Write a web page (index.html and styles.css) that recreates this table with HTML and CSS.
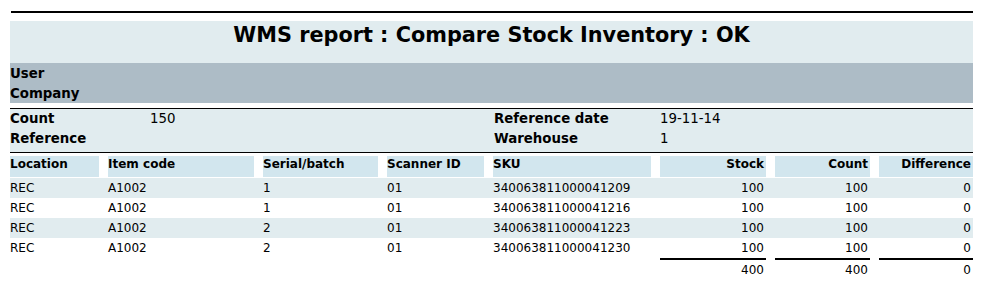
FILE: index.html
```html
<!DOCTYPE html>
<html>
<head>
<meta charset="utf-8">
<link rel="stylesheet" href="styles.css">
</head>
<body>
<div class="report">
  <div class="rule rule-thick"></div>
  <div class="title-band"><h1 class="title">WMS report : Compare Stock Inventory : OK</h1></div>
  <div class="meta-gray">
    <div class="meta-row"><span class="label">User</span></div>
    <div class="meta-row"><span class="label">Company</span></div>
  </div>
  <div class="rule rule-mid"></div>
  <div class="info">
    <span class="label">Count</span><span class="value">150</span><span class="label">Reference date</span><span class="value">19-11-14</span>
    <span class="label">Reference</span><span class="value"></span><span class="label">Warehouse</span><span class="value">1</span>
  </div>
  <div class="rule"></div>
  <div class="items">
    <div class="row head">
      <div class="cell">Location</div>
      <div class="cell">Item code</div>
      <div class="cell">Serial/batch</div>
      <div class="cell">Scanner ID</div>
      <div class="cell">SKU</div>
      <div class="cell num">Stock</div>
      <div class="cell num">Count</div>
      <div class="cell num">Difference</div>
    </div>
    <div class="row alt">
      <div class="cell">REC</div><div class="cell">A1002</div><div class="cell">1</div><div class="cell">01</div><div class="cell">340063811000041209</div><div class="cell num">100</div><div class="cell num">100</div><div class="cell num">0</div>
    </div>
    <div class="row">
      <div class="cell">REC</div><div class="cell">A1002</div><div class="cell">1</div><div class="cell">01</div><div class="cell">340063811000041216</div><div class="cell num">100</div><div class="cell num">100</div><div class="cell num">0</div>
    </div>
    <div class="row alt">
      <div class="cell">REC</div><div class="cell">A1002</div><div class="cell">2</div><div class="cell">01</div><div class="cell">340063811000041223</div><div class="cell num">100</div><div class="cell num">100</div><div class="cell num">0</div>
    </div>
    <div class="row">
      <div class="cell">REC</div><div class="cell">A1002</div><div class="cell">2</div><div class="cell">01</div><div class="cell">340063811000041230</div><div class="cell num">100</div><div class="cell num">100</div><div class="cell num">0</div>
    </div>
    <div class="row totals">
      <div class="cell"></div><div class="cell"></div><div class="cell"></div><div class="cell"></div><div class="cell"></div>
      <div class="cell num total">400</div><div class="cell num total">400</div><div class="cell num total">0</div>
    </div>
  </div>
</div>
</body>
</html>
```
FILE: styles.css
```css
html, body {
  margin: 0;
  padding: 0;
  background: #ffffff;
}
body {
  font-family: "DejaVu Sans", Verdana, sans-serif;
  color: #000000;
}
.report {
  width: 963px;
  padding: 11px 0 0 10px;
}
.rule {
  height: 1px;
  background: #000000;
}
.rule-thick {
  height: 2px;
  margin-left: 1px;
  margin-bottom: 8px;
}
.rule-mid {
  margin-top: 5px;
}
.title-band {
  background: #e1ecef;
  height: 42px;
  padding-top: 2px;
  box-sizing: border-box;
}
.title {
  margin: 0;
  font-size: 20.8px;
  line-height: 25px;
  font-weight: bold;
  text-align: center;
}
.meta-gray {
  background: #adbcc6;
  height: 40px;
}
.meta-row {
  height: 20px;
  line-height: 20px;
}
.label {
  font-size: 13.33px;
  font-weight: bold;
}
.value {
  font-size: 13.33px;
}
.info {
  background: #e1ecef;
  display: grid;
  grid-template-columns: 140px 344px 166px 1fr;
  grid-auto-rows: 20px;
  line-height: 20px;
  padding-bottom: 3px;
}
.items {
  margin-top: 3px;
  font-size: 12px;
}
.row {
  display: grid;
  grid-template-columns: 89px 146px 115px 97px 158px 106px 95px 94px;
  column-gap: 9px;
  height: 20px;
  line-height: 20px;
}
.row.alt {
  background: #e1ecef;
}
.row.head {
  height: 21px;
  margin-bottom: 1px;
  line-height: 15px;
  font-weight: bold;
}
.row.head .cell {
  background: #d2e6ee;
  padding-top: 1px;
}
.cell {
  white-space: nowrap;
}
.cell.num {
  text-align: right;
  padding-right: 2px;
}
.row.totals {
  height: 22px;
}
.cell.total {
  border-top: 2px solid #000000;
}
```
